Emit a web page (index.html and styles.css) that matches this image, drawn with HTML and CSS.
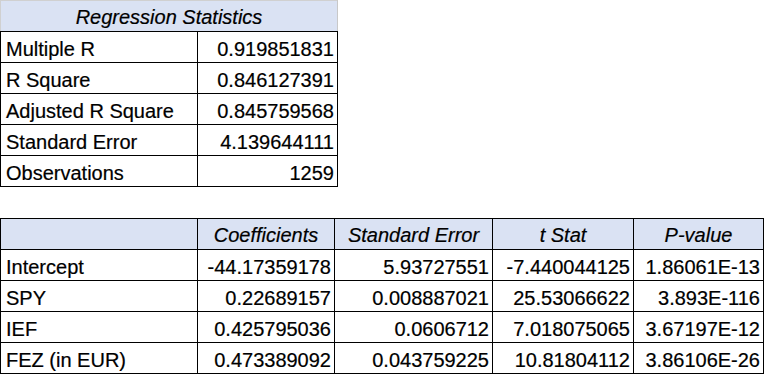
FILE: index.html
```html
<!DOCTYPE html>
<html>
<head>
<meta charset="utf-8">
<link rel="stylesheet" href="styles.css">
</head>
<body>
<div class="sheet">
  <table class="grid stats">
    <colgroup><col class="c-label"><col class="c-num"></colgroup>
    <thead>
      <tr><th colspan="2" class="title">Regression Statistics</th></tr>
    </thead>
    <tbody>
      <tr><td>Multiple R</td><td class="num">0.919851831</td></tr>
      <tr><td>R Square</td><td class="num">0.846127391</td></tr>
      <tr><td>Adjusted R Square</td><td class="num">0.845759568</td></tr>
      <tr><td>Standard Error</td><td class="num">4.139644111</td></tr>
      <tr><td>Observations</td><td class="num">1259</td></tr>
    </tbody>
  </table>

  <table class="grid coef">
    <colgroup>
      <col class="c-label"><col class="c-coef"><col class="c-se"><col class="c-t"><col class="c-p">
    </colgroup>
    <thead>
      <tr class="head"><th></th><th>Coefficients</th><th>Standard Error</th><th>t Stat</th><th>P-value</th></tr>
    </thead>
    <tbody>
      <tr><td>Intercept</td><td class="num">-44.17359178</td><td class="num">5.93727551</td><td class="num">-7.440044125</td><td class="num">1.86061E-13</td></tr>
      <tr><td>SPY</td><td class="num">0.22689157</td><td class="num">0.008887021</td><td class="num">25.53066622</td><td class="num">3.893E-116</td></tr>
      <tr><td>IEF</td><td class="num">0.425795036</td><td class="num">0.0606712</td><td class="num">7.018075065</td><td class="num">3.67197E-12</td></tr>
      <tr><td>FEZ (in EUR)</td><td class="num">0.473389092</td><td class="num">0.043759225</td><td class="num">10.81804112</td><td class="num">3.86106E-26</td></tr>
    </tbody>
  </table>
</div>
</body>
</html>
```

FILE: styles.css
```css
html, body {
  margin: 0;
  padding: 0;
  background: #ffffff;
}

.sheet {
  display: flex;
  flex-direction: column;
  align-items: flex-start;
  gap: 31px;
  font-family: "Liberation Sans", Arial, sans-serif;
  font-size: 20px;
  color: #000000;
}

.grid {
  border-collapse: collapse;
  table-layout: fixed;
}

.grid td,
.grid th {
  height: 31px;
  padding: 0 3px 2px 5px;
  border: 1px solid #000000;
  vertical-align: bottom;
  white-space: nowrap;
  text-align: left;
  font-weight: normal;
  line-height: 22px;
  box-sizing: border-box;
  -webkit-text-stroke: 0.2px #000000;
}

.grid th {
  background: #dae2f3;
  font-style: italic;
  text-align: center;
  padding: 0 2px 3px 2px;
}

.grid .num {
  text-align: right;
}

.stats {
  width: 337px;
}

.stats .title {
  border-top: 1px solid #d0d0d0;
  border-left: 1px solid #d0d0d0;
  border-right: 1px solid #c8c8c8;
}

.coef {
  width: 763px;
}

.c-label { width: 197px; }
.c-num { width: 140px; }
.c-coef { width: 137px; }
.c-se { width: 158px; }
.c-t { width: 141px; }
.c-p { width: 130px; }
```
